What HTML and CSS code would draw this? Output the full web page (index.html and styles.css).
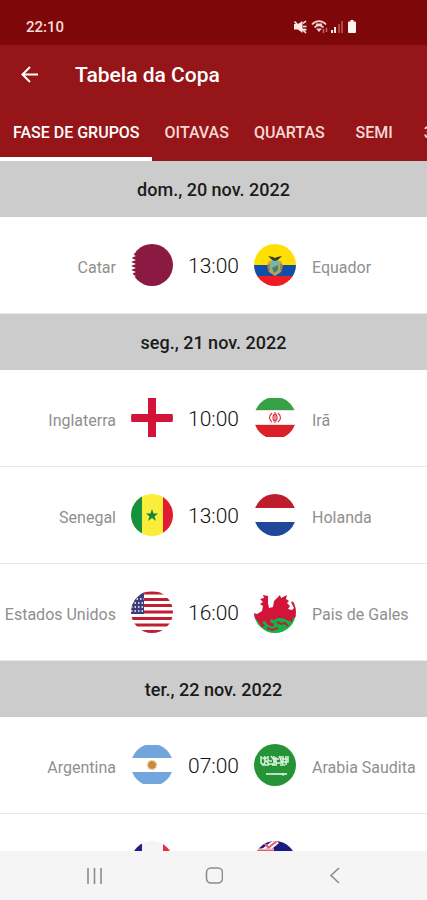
FILE: index.html
```html
<!DOCTYPE html>
<html lang="pt-BR">
<head>
<meta charset="utf-8">
<meta name="viewport" content="width=device-width, initial-scale=1">
<title>Tabela da Copa</title>
<link rel="stylesheet" href="styles.css">
</head>
<body>
<header class="app-header">
  <div class="status-bar">
    <span class="clock">22:10</span>
    <svg class="status-icons" width="66" height="16" viewBox="0 0 66 16" aria-hidden="true">
      <path d="M1 5h4L9.500 2v12L5 10.500H1z" fill="#fde9e4"/>
      <path d="M1.500 2.500l11.500 11.500M10 4.500l3-2.500M10 7.500h3.500M10.500 10l3 1" stroke="#fde9e4" stroke-width="1.600" fill="none"/>
      <path d="M19 5.500c4-4.500 10-4.500 14 0M21.500 8.500c2.500-3 6.500-3 9 0M23 5.500h6" stroke="#f3d3ce" stroke-width="1.800" fill="none"/>
      <path d="M23 9.500h6L26 13z" fill="#f3d3ce"/>
      <path d="M30.500 10v4M33.500 9v4" stroke="#b96c6b" stroke-width="1.500"/>
      <path d="M38 11h2v3h-2zM41 8h2v6h-2z" fill="#fde9e4"/>
      <path d="M45 5h2v9h-2zM48 2h2v12h-2z" fill="#a8484a"/>
      <path d="M57.500 1h3v1.500h1.500q1 0 1 1V13q0 1-1 1h-6q-1 0-1-1V3.500q0-1 1-1h1.500z" fill="#fff4ee"/>
    </svg>
  </div>
  <div class="title-bar">
    <button class="back" type="button" aria-label="Voltar">
      <svg width="18" height="18" viewBox="0 0 18 18"><path d="M17 8.500H2M9 1L1.500 8.500L9 16" fill="none" stroke="#fff" stroke-width="2"/></svg>
    </button>
    <h1>Tabela da Copa</h1>
  </div>
  <nav class="tabs">
    <a class="tab active" href="#grupos">FASE DE GRUPOS</a>
    <a class="tab" href="#oitavas">OITAVAS</a>
    <a class="tab" href="#quartas">QUARTAS</a>
    <a class="tab" href="#semi">SEMI</a>
    <a class="tab" href="#terceiro">3º LUGAR</a>
  </nav>
</header>

<main class="schedule" id="grupos">
  <h2 class="date">dom., 20 nov. 2022</h2>
  <div class="match">
    <span class="team home">Catar</span>
    <svg class="flag" viewBox="0 0 42 42"><path d="M0 0h42v42H0z" fill="#fff"/><path d="M42 0H5v8l-4 2 4 2-5 2 5 2-5 2 5 2-5 2 5 2-5 2 5 2-5 2 5 2-4 2 4 2v8h37z" fill="#8a1a42"/></svg>
    <time class="time">13:00</time>
    <svg class="flag" viewBox="0 0 42 42"><path d="M0 0h42v21H0z" fill="#ffdf00"/><path d="M0 21h42v11H0z" fill="#114ea8"/><path d="M0 32h42v10H0z" fill="#ee1c25"/><path d="M15 17q-3 5 0 11l6 4 6-4q3-6 0-11z" fill="#c9a04a"/><ellipse cx="21" cy="22" rx="5" ry="7" fill="#76b6aa"/><path d="M18 24l6-3v5l-4 3z" fill="#557c55"/><path d="M14 12l5 1 2 1 2-1 5-1-4 4-3 1-3-1z" fill="#403d25"/><path d="M15 20v7M27 20v7" stroke="#9b5b34" stroke-width="1"/></svg>
    <span class="team away">Equador</span>
  </div>

  <h2 class="date">seg., 21 nov. 2022</h2>
  <div class="match">
    <span class="team home">Inglaterra</span>
    <svg class="flag" viewBox="0 0 42 42"><path d="M0 0h42v42H0z" fill="#fff"/><path d="M17 1h8v16h17v8H25v15h-8V25H0v-8h17z" fill="#d2143a"/></svg>
    <time class="time">10:00</time>
    <svg class="flag" viewBox="0 0 42 42"><path d="M0 0h42v42H0z" fill="#fff"/><path d="M0 1h42v12H0z" fill="#36a146"/><path d="M0 28h42v12H0z" fill="#da2128"/><path d="M0 13.500h42M0 27.500h42" stroke="#f0dcda" stroke-width="1"/><path d="M21 15v11M18 16q-5 5 0 9M24 16q5 5 0 9M20 17q-2 4 0 7M22 17q2 4 0 7" stroke="#d93a40" stroke-width="1.200" fill="none"/></svg>
    <span class="team away">Irã</span>
  </div>
  <div class="match">
    <span class="team home">Senegal</span>
    <svg class="flag" viewBox="0 0 42 42"><path d="M0 0h42v42H0z" fill="#fbee3a"/><path d="M0 0h11v42H0z" fill="#14913f"/><path d="M32 0h10v42H32z" fill="#e21b36"/><path d="M21 15l1.500 4.500H27l-3.500 3 1.500 4.500-4-3-4 3 1.500-4.500-3.500-3h4.500z" fill="#14853c"/></svg>
    <time class="time">13:00</time>
    <svg class="flag" viewBox="0 0 42 42"><path d="M0 0h42v42H0z" fill="#fff"/><path d="M0 0h42v14H0z" fill="#bd1d2c"/><path d="M0 28h42v14H0z" fill="#20479a"/></svg>
    <span class="team away">Holanda</span>
  </div>
  <div class="match">
    <span class="team home">Estados Unidos</span>
    <svg class="flag" viewBox="0 0 42 42"><path d="M0 0h42v42H0z" fill="#fff"/><path d="M0 2h42M0 8.500h42M0 14.500h42M0 21h42M0 27.500h42M0 34h42M0 40.500h42" stroke="#be2031" stroke-width="3"/><path d="M0 0h13v23H0z" fill="#3c3b7c"/><path d="M2 8h11M0 12h13M0 16h13M0 20h13" stroke="#fff" stroke-width="1.500" stroke-dasharray="1.500 2"/></svg>
    <time class="time">16:00</time>
    <svg class="flag" viewBox="0 0 42 42"><path d="M0 0h42v24H0z" fill="#fff"/><path d="M0 24h42v18H0z" fill="#13b04b"/><path d="M6 8L10 7L9 4L14 5L14 12L15 17L19 16L20 10L26 4L27 7L33 4L32 8L35 10L33 12L36 15L34 18L38 19L40 17L37 11L40 10L42 16L42 26L39 27L38 31L33 29L28 27L24 27L20 29L17 28L16 31L20 33L19 36L14 34L11 30L8 31L11 35L8 36L3 29L0 27L0 22L3 23L8 20L9 15L6 13L9 11z" fill="#d2143a"/><path d="M23 31l4 2 4-1 3 3M13 37l5 2 6-2" stroke="#b3282d" stroke-width="2" fill="none"/></svg>
    <span class="team away">Pais de Gales</span>
  </div>

  <h2 class="date">ter., 22 nov. 2022</h2>
  <div class="match">
    <span class="team home">Argentina</span>
    <svg class="flag" viewBox="0 0 42 42"><path d="M0 0h42v42H0z" fill="#fff"/><path d="M0 1h42v13H0zM0 28h42v12H0z" fill="#72a5dc"/><circle cx="21" cy="21" r="4" fill="#c98a3a"/><circle cx="21" cy="21" r="4.500" fill="none" stroke="#dfb26c" stroke-width="1.500" stroke-dasharray="1 1"/></svg>
    <time class="time">07:00</time>
    <svg class="flag" viewBox="0 0 42 42"><path d="M0 0h42v42H0z" fill="#249436"/><path d="M7 12v7q3 3 4-1v-6M10 15l5 5h5v-8M14 12v5h4M17 12l6 8M22 13v6h5v-7M25 12l4 8M29 12v6h5v-6M32 12v9M8 21h7M18 21h5M26 21h5M8 14h5M19 15h6M28 15h6" stroke="#d9f0dc" stroke-width="1.500" fill="none"/><path d="M12 30h21" stroke="#f1faf2" stroke-width="1.500"/><path d="M29 29v3" stroke="#f1faf2" stroke-width="1"/></svg>
    <span class="team away">Arabia Saudita</span>
  </div>
  <div class="match">
    <span class="team home">França</span>
    <svg class="flag" viewBox="0 0 42 42"><path d="M0 0h42v42H0z" fill="#f4f5f6"/><path d="M0 2h11v40H0z" fill="#20208a"/><path d="M32 2h10v40H32z" fill="#e2303f"/></svg>
    <time class="time">16:00</time>
    <svg class="flag" viewBox="0 0 42 42"><path d="M0 0h42v42H0z" fill="#1b1b80"/><path d="M0 18L23 0" stroke="#fff" stroke-width="6"/><path d="M0 18L23 0M8 0l12 12" stroke="#e4606c" stroke-width="2"/><path d="M0 10h20" stroke="#fff" stroke-width="5"/><path d="M0 10h20" stroke="#e4606c" stroke-width="3"/></svg>
    <span class="team away">Austrália</span>
  </div>
</main>

<footer class="system-nav">
  <button type="button" aria-label="Recentes"><svg width="18" height="18" viewBox="0 0 18 18"><path d="M3 1v16M9.500 1v16M16 1v16" stroke="#8c8c8c" stroke-width="1.600"/></svg></button>
  <button type="button" aria-label="Início"><svg width="18" height="18" viewBox="0 0 18 18"><rect x="1.500" y="1" width="16" height="15" rx="4.500" fill="none" stroke="#8c8c8c" stroke-width="1.600"/></svg></button>
  <button type="button" aria-label="Voltar"><svg width="18" height="18" viewBox="0 0 18 18"><path d="M14 1L6 8.500l8 7.500" fill="none" stroke="#8c8c8c" stroke-width="1.600"/></svg></button>
</footer>
</body>
</html>
```
FILE: styles.css
```css
* {
  box-sizing: border-box;
}

body {
  margin: 0;
  height: 100vh;
  display: flex;
  flex-direction: column;
  background: #fff;
  font-family: Roboto, "Liberation Sans", sans-serif;
}

button {
  border: 0;
  padding: 0;
  background: none;
}

svg {
  display: block;
}

.app-header {
  flex: none;
  background: #961518;
  color: #fff;
}

.status-bar {
  display: flex;
  align-items: center;
  justify-content: space-between;
  height: 45px;
  padding: 9px 68px 0 26px;
  background: #7e070a;
}

.clock {
  font-size: 15px;
  font-weight: 500;
  color: #f8dcd6;
}

.title-bar {
  display: flex;
  align-items: center;
  gap: 36px;
  height: 59px;
  padding: 0 21px;
}

h1 {
  margin: 0;
  font-size: 21px;
  font-weight: 500;
}

.tabs {
  display: flex;
  height: 57px;
  overflow: hidden;
}

.tab {
  flex: none;
  display: flex;
  align-items: center;
  justify-content: center;
  min-width: 74px;
  padding: 3px 12px 0 13px;
  border-bottom: 4px solid transparent;
  color: #f5d9d5;
  font-size: 16px;
  font-weight: 500;
  text-decoration: none;
}

.tab.active {
  border-color: #fff;
  color: #fff;
}

.schedule {
  flex: 1;
  min-height: 0;
  overflow-y: auto;
  scrollbar-width: none;
}

.date {
  display: flex;
  align-items: center;
  justify-content: center;
  height: 56px;
  margin: 0;
  background: #ccc;
  color: #1b1b1b;
  font-size: 18px;
  font-weight: 500;
}

.match {
  display: grid;
  grid-template-columns: 1fr 42px 81px 42px 1fr;
  align-items: center;
  height: 97px;
  border-bottom: 1px solid #e8e8e8;
}

.team {
  padding-top: 4px;
  color: #8f8f8f;
  font-size: 16px;
  white-space: nowrap;
}

.home {
  padding-right: 15px;
  text-align: right;
}

.away {
  padding-left: 16px;
}

.flag {
  width: 42px;
  height: 42px;
  border-radius: 50%;
}

.time {
  padding-top: 2px;
  text-align: center;
  color: #111;
  font-size: 21px;
  font-weight: 300;
}

.system-nav {
  flex: none;
  display: flex;
  align-items: center;
  justify-content: center;
  height: 49px;
  background: #f5f5f5;
}

.system-nav button {
  display: flex;
  justify-content: center;
  width: 120px;
}
```
